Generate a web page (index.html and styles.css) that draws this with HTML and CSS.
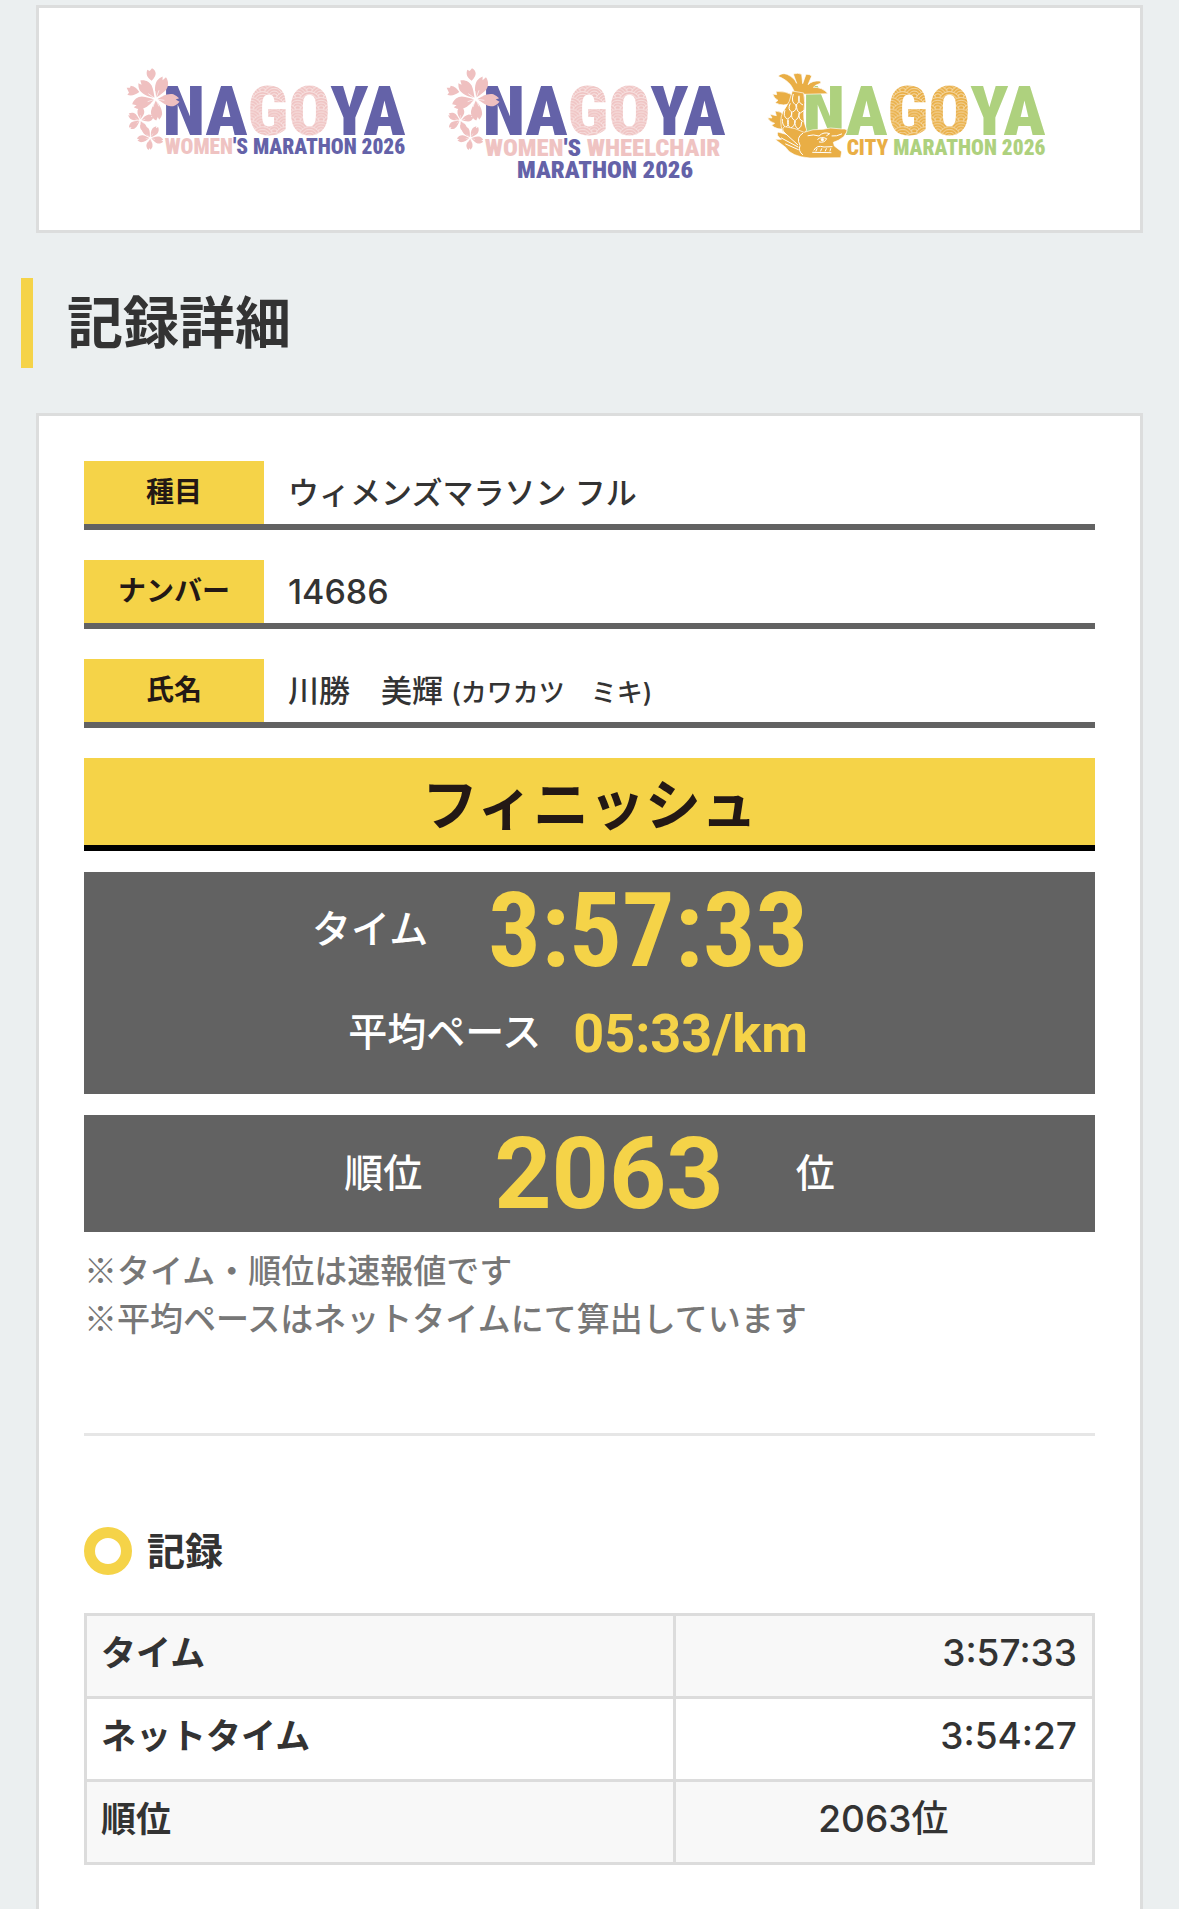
FILE: index.html
```html
<!DOCTYPE html>
<html lang="ja">
<head>
    <meta charset="UTF-8">
    <meta name="viewport" content="width=device-width, initial-scale=1.0">
    <title>記録詳細</title>
    <link rel="stylesheet" href="styles.css">
</head>
<body>
    <!-- shared shapes for the logos -->
    <svg class="defs" width="0" height="0">
        <defs>
            <pattern id="wave-pink" width="44" height="22" patternUnits="userSpaceOnUse" patternTransform="scale(1.6)">
                <rect width="44" height="22" fill="#efc3c2"/>
                <g fill="#efc3c2" stroke="#fff" stroke-width="1">
                    <circle cx="22" cy="11" r="21"/><circle cx="22" cy="11" r="16"/><circle cx="22" cy="11" r="11"/><circle cx="22" cy="11" r="6"/>
                    <circle cx="0" cy="22" r="21"/><circle cx="0" cy="22" r="16"/><circle cx="0" cy="22" r="11"/><circle cx="0" cy="22" r="6"/>
                    <circle cx="44" cy="22" r="21"/><circle cx="44" cy="22" r="16"/><circle cx="44" cy="22" r="11"/><circle cx="44" cy="22" r="6"/>
                    <circle cx="22" cy="33" r="21"/><circle cx="22" cy="33" r="16"/>
                </g>
            </pattern>
            <pattern id="wave-gold" width="44" height="22" patternUnits="userSpaceOnUse" patternTransform="scale(1.6)">
                <rect width="44" height="22" fill="#e9ae45"/>
                <g fill="#e9ae45" stroke="#fff" stroke-width="1">
                    <circle cx="22" cy="11" r="21"/><circle cx="22" cy="11" r="16"/><circle cx="22" cy="11" r="11"/><circle cx="22" cy="11" r="6"/>
                    <circle cx="0" cy="22" r="21"/><circle cx="0" cy="22" r="16"/><circle cx="0" cy="22" r="11"/><circle cx="0" cy="22" r="6"/>
                    <circle cx="44" cy="22" r="21"/><circle cx="44" cy="22" r="16"/><circle cx="44" cy="22" r="11"/><circle cx="44" cy="22" r="6"/>
                    <circle cx="22" cy="33" r="21"/><circle cx="22" cy="33" r="16"/>
                </g>
            </pattern>
            <path id="petal" d="M0 -5 C-8 -16 -20 -32 -18 -52 Q-15 -62 -7 -70 L-3 -60 L3 -72 C16 -64 21 -50 18 -38 C14 -26 6 -14 0 -5 Z"/>
            <g id="blossom">
                <use href="#petal" transform="rotate(23)"/>
                <use href="#petal" transform="rotate(94)"/>
                <use href="#petal" transform="rotate(176) scale(.9)"/>
                <use href="#petal" transform="rotate(255)"/>
                <use href="#petal" transform="rotate(318)"/>
                <g stroke="#fff" stroke-width="2" fill="none">
                    <path d="M0 0L10 -26M0 0L-2 -24M0 0L26 4M0 0L22 -10M0 0L10 22M0 0L-8 24M0 0L-24 8M0 0L-22 -16"/>
                </g>
            </g>
            <g id="sakura" fill="#efc0c0">
                <use href="#blossom" transform="translate(137 147)"/>
                <use href="#blossom" transform="translate(91 211) rotate(-20) scale(.56)"/>
                <use href="#blossom" transform="translate(121 264) rotate(10) scale(.56)"/>
                <path d="M112 59 L119 63 L126 55 C140 63 142 76 125 92 C111 82 107 72 112 59Z"/>
                <path d="M50 113 L60 113 L62 107 C75 109 83 117 88 126 C74 137 61 138 52 134 L57 128Z"/>
            </g>
            <g id="shachi" fill="#e9ae45" stroke="#fff" stroke-width="2" stroke-linejoin="round">
                <path d="M134 130 C127 105 111 89 84 79 Q94 67 111 73 Q133 83 140 100 L130 72 Q144 67 155 73 L158 101 L168 73 Q179 72 185 78 L174 104 Q187 91 210 93 Q216 99 208 101 Q195 105 190 112 Q217 111 234 131 L160 133Z"/>
                <path d="M128 157 Q101 172 75 158 L84 151 Q72 145 68 132 L80 134 L78 124 Q105 122 133 137Z"/>
                <path d="M106 236 Q82 241 65 226 L74 220 Q58 216 53 203 L66 204 L60 193 L79 197 L75 183 Q93 182 105 199Z"/>
                <path d="M127 123 L161 129 Q167 156 161 190 Q160 218 170 240 L155 263 L98 246 Q86 211 99 185 Q122 155 127 123Z"/>
                <g stroke-width="3">
                    <path d="M130 132 Q122 158 138 165 Q150 157 147 139M147 137 Q142 158 159 165"/>
                    <path d="M121 160 Q111 178 126 187 Q143 180 137 164M140 164 Q138 184 151 189 L162 181"/>
                    <path d="M105 180 Q98 200 112 207 Q128 200 124 185M126 187 Q121 205 135 212 Q148 204 147 188M148 189 Q143 208 160 215"/>
                    <path d="M97 207 Q96 225 107 232 Q119 226 114 209M114 208 Q109 226 122 234 Q136 228 134 212M136 212 Q132 230 145 237 Q156 231 155 215"/>
                </g>
                <path d="M162 247 Q188 236 218 238 L242 234 L276 237 Q294 235 290 246 L281 260 Q265 273 250 277 L253 288 L275 305 L272 323 L180 324 Q123 320 107 292 L75 268 L94 268 Q77 256 84 246 L108 253 Q92 238 103 230 Q137 233 162 247Z"/>
                <g fill="none" stroke-width="3" stroke-linecap="round">
                    <path d="M100 245 L143 284M94 264 L144 291M107 282 L145 299M158 250 Q137 262 150 286 Q144 304 158 314"/>
                    <path d="M174 257 Q190 252 207 258 Q221 244 239 251 L230 257M246 258 Q259 260 275 252"/>
                    <path d="M192 300 Q200 284 222 291 L246 290M188 307 L243 308"/>
                    <path d="M198 303 L201 296M212 303 L215 296M226 303 L229 296M240 303 L242 296"/>
                    <path d="M203 268 Q213 258 230 266 Q224 280 208 276"/>
                </g>
                <circle cx="217" cy="269" r="4" fill="#fff"/>
            </g>
        </defs>
    </svg>

    <div class="card logos">
        <svg class="logo" viewBox="0 0 960 450">
            <text class="logo-name" x="158" y="254"><tspan class="purple">NA</tspan><tspan fill="url(#wave-pink)">GO</tspan><tspan class="purple">YA</tspan></text>
            <use href="#sakura"/>
            <text class="logo-sub" x="164" y="312"><tspan class="pink">WOMEN</tspan><tspan class="purple">'S MARATHON 2026</tspan></text>
        </svg>
        <svg class="logo" viewBox="0 0 960 450">
            <text class="logo-name" x="158" y="254"><tspan class="purple">NA</tspan><tspan fill="url(#wave-pink)">GO</tspan><tspan class="purple">YA</tspan></text>
            <use href="#sakura"/>
            <text class="logo-sub logo-sub-large" x="164" y="318"><tspan class="pink">WOMEN</tspan><tspan class="purple">'S</tspan><tspan class="pink"> WHEELCHAIR</tspan></text>
            <text class="logo-sub logo-sub-large purple" x="525" y="383" text-anchor="middle">MARATHON 2026</text>
        </svg>
        <svg class="logo" viewBox="0 0 960 450">
            <text class="logo-name" x="158" y="254"><tspan class="green">NA</tspan><tspan fill="url(#wave-gold)">GO</tspan><tspan class="green">YA</tspan></text>
            <use href="#shachi"/>
            <text class="logo-sub" x="290" y="315"><tspan class="gold">CITY</tspan><tspan class="green"> MARATHON 2026</tspan></text>
        </svg>
    </div>

    <h1>記録詳細</h1>

    <div class="card">
        <dl class="profile">
            <div class="profile-row">
                <dt>種目</dt>
                <dd>ウィメンズマラソン フル</dd>
            </div>
            <div class="profile-row">
                <dt>ナンバー</dt>
                <dd class="number">14686</dd>
            </div>
            <div class="profile-row">
                <dt>氏名</dt>
                <dd>川勝　美輝 <small>(カワカツ　ミキ)</small></dd>
            </div>
        </dl>

        <div class="finish">フィニッシュ</div>

        <div class="result result-time">
            <div class="result-row">
                <span>タイム</span>
                <strong class="time">3:57:33</strong>
            </div>
            <div class="result-row pace">
                <span>平均ペース</span>
                <strong>05:33/km</strong>
            </div>
        </div>
        <div class="result result-rank">
            <span>順位</span>
            <strong class="rank">2063</strong>
            <span>位</span>
        </div>

        <p class="notes">※タイム・順位は速報値です<br>※平均ペースはネットタイムにて算出しています</p>

        <hr>

        <h2>記録</h2>
        <table>
            <tr>
                <th scope="row">タイム</th>
                <td>3:57:33</td>
            </tr>
            <tr>
                <th scope="row">ネットタイム</th>
                <td>3:54:27</td>
            </tr>
            <tr>
                <th scope="row">順位</th>
                <td class="center">2063位</td>
            </tr>
        </table>
    </div>
</body>
</html>
```
FILE: styles.css
```css
*, *::before {
    box-sizing: border-box;
}
body {
    margin: 0;
    padding: 5px 36px 0;
    background: #ebeff0;
    color: #333;
    font-family: Inter, "Noto Sans CJK JP", sans-serif;
    font-weight: 500;
}
.defs {
    display: block;
}
.card {
    padding: 45px;
    background: #fff;
    border: 3px solid #dcdddd;
}

/* logos */
.logos {
    display: flex;
    justify-content: center;
    padding: 42px 0 30px;
}
.logo {
    flex: 0 1 320px;
    min-width: 0;
}
.logo-name, .logo-sub {
    font-family: "Roboto Condensed", Roboto, sans-serif;
    font-weight: 900;
}
.logo-name {
    font-size: 208px;
}
.logo-sub {
    font-size: 64px;
}
.logo-sub-large {
    font-size: 74px;
}
.purple {
    fill: #6462a8;
}
.pink {
    fill: #efc3c2;
}
.green {
    fill: #aed17e;
}
.gold {
    fill: #e9ae45;
}

h1 {
    margin: 45px 0 45px -15px;
    padding-left: 34px;
    border-left: 12px solid #f5d348;
    font-size: 56px;
    line-height: 90px;
}

/* profile */
.profile {
    display: grid;
    gap: 30px;
    margin: 0 0 30px;
}
.profile-row {
    display: flex;
    border-bottom: 6px solid #626262;
    line-height: 63px;
}
.profile dt {
    width: 180px;
    background: #f5d348;
    color: #231815;
    font-size: 28px;
    font-weight: bold;
    text-align: center;
}
.profile dd {
    flex: 1;
    margin: 0;
    padding-left: 24px;
    font-size: 31px;
}
.profile .number {
    font-size: 34px;
}
.profile small {
    font-size: 26px;
    line-height: 1;
}

.finish {
    margin-bottom: 21px;
    padding-top: 7px;
    background: #f5d348;
    border-bottom: 6px solid #000;
    color: #231815;
    font-size: 56px;
    font-weight: bold;
    line-height: 80px;
    text-align: center;
}

/* time and rank */
.result {
    margin-bottom: 21px;
    background: #626262;
    color: #fff;
    font-size: 39px;
}
.result span {
    padding-bottom: 8px;
}
.result strong {
    color: #f5d348;
    font-family: Roboto, sans-serif;
    font-size: 54px;
}
.result .time {
    font-family: "Roboto Condensed", Roboto, sans-serif;
    font-size: 104px;
}
.result .rank {
    font-size: 100px;
}
.result-time {
    padding: 0 287px 16px 0;
}
.result-row {
    display: flex;
    justify-content: flex-end;
    align-items: center;
    gap: 60px;
    height: 116px;
}
.pace {
    gap: 32px;
    height: 90px;
}
.result-rank {
    display: flex;
    justify-content: center;
    align-items: center;
    gap: 72px;
    height: 117px;
    margin-bottom: 13px;
}

.notes {
    margin: 0;
    color: #777;
    font-family: "Noto Sans CJK JP", sans-serif;
    font-size: 33px;
    line-height: 48px;
}
hr {
    height: 3px;
    margin: 92px 0 88px;
    border: 0;
    background: #e6e6e6;
}

/* record table */
h2 {
    display: flex;
    align-items: center;
    gap: 15px;
    margin: 0 0 35px;
    font-size: 38px;
    line-height: 54px;
}
h2::before {
    content: "";
    width: 48px;
    height: 48px;
    border: 11px solid #f5d348;
    border-radius: 50%;
}
table {
    width: 100%;
    border-collapse: collapse;
    font-size: 35px;
    line-height: 50px;
}
th, td {
    padding: 12px 15px 18px 14px;
    border: 3px solid #dcdcdc;
}
th {
    width: 58.4%;
    text-align: left;
}
td {
    font-size: 37px;
    text-align: right;
}
tr:nth-child(odd) {
    background: #f8f8f8;
}
.center {
    text-align: center;
}
```
